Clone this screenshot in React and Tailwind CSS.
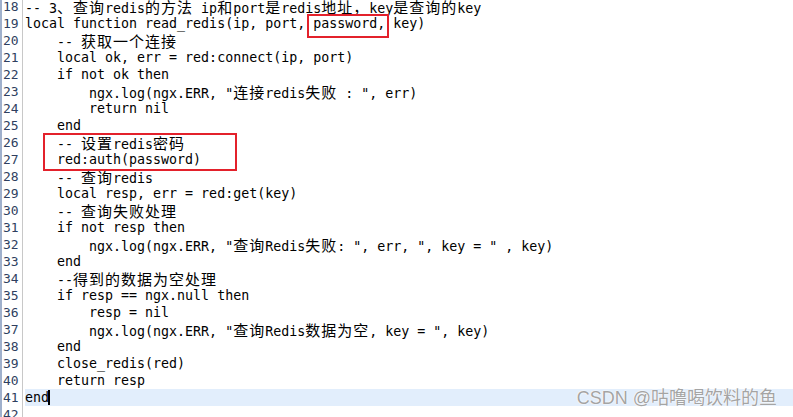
import React from "react";

const lines = [
  [18, "-- 3、查询redis的方法 ip和port是redis地址，key是查询的key"],
  [19, "local function read_redis(ip, port, password, key)"],
  [20, "    -- 获取一个连接"],
  [21, "    local ok, err = red:connect(ip, port)"],
  [22, "    if not ok then"],
  [23, "        ngx.log(ngx.ERR, \"连接redis失败 : \", err)"],
  [24, "        return nil"],
  [25, "    end"],
  [26, "    -- 设置redis密码"],
  [27, "    red:auth(password)"],
  [28, "    -- 查询redis"],
  [29, "    local resp, err = red:get(key)"],
  [30, "    -- 查询失败处理"],
  [31, "    if not resp then"],
  [32, "        ngx.log(ngx.ERR, \"查询Redis失败: \", err, \", key = \" , key)"],
  [33, "    end"],
  [34, "    --得到的数据为空处理"],
  [35, "    if resp == ngx.null then"],
  [36, "        resp = nil"],
  [37, "        ngx.log(ngx.ERR, \"查询Redis数据为空, key = \", key)"],
  [38, "    end"],
  [39, "    close_redis(red)"],
  [40, "    return resp"],
  [41, "end"],
  [42, ""],
];

function splitRuns(text) {
  const runs = [];
  const re = /[\u3000-\u303f\u4e00-\u9fff\uff00-\uffef]+/g;
  let last = 0;
  let m;
  while ((m = re.exec(text)) !== null) {
    if (m.index > last) runs.push({ cjk: false, t: text.slice(last, m.index) });
    runs.push({ cjk: true, t: m[0] });
    last = m.index + m[0].length;
  }
  if (last < text.length) runs.push({ cjk: false, t: text.slice(last) });
  return runs;
}

function Code({ text }) {
  return splitRuns(text).map((r, i) =>
    r.cjk ? (
      <span
        key={i}
        className="text-[15px] tracking-[1px] leading-[17px] font-['Noto_Sans_CJK_SC',sans-serif]"
      >
        {r.t}
      </span>
    ) : (
      <span key={i}>{r.t}</span>
    )
  );
}

export default function App() {
  return (
    <div className="relative w-[793px] h-[417px] overflow-hidden bg-white">
      <div className="flex h-[440px] -mt-[2px] font-['DejaVu_Sans_Mono','Liberation_Mono',monospace] text-[13.3px] text-black">
        <div className="w-[23px] shrink-0 border-l-2 border-l-[#9fb0cc] border-r border-r-[#c8c8c8] bg-white">
          {lines.map(([n]) => (
            <div
              key={n}
              className="h-[17px] leading-[17px] pl-[1px] text-[#2f3f5f] text-[13px] whitespace-pre"
            >
              {n}
            </div>
          ))}
        </div>
        <div className="flex-1 pl-[2px]">
          {lines.map(([n, text]) => (
            <div
              key={n}
              className={
                "relative h-[17px] leading-[17px] whitespace-pre " +
                (n === 41 ? "bg-[#e2eefc]" : "")
              }
            >
              <Code text={text} />
              {n === 41 && (
                <span className="absolute left-[23px] top-[1px] w-[2px] h-[15px] bg-black" />
              )}
            </div>
          ))}
        </div>
      </div>

      <div className="absolute left-[307px] top-[14px] w-[82px] h-[24px] border-2 border-[#e3212b]" />
      <div className="absolute left-[43px] top-[133px] w-[194px] h-[38px] border-2 border-[#e3212b]" />

      <div className="absolute right-[16px] top-[387px] text-[18px] leading-[22px] text-[#a4a4a4] font-['Liberation_Sans','Noto_Sans_CJK_SC',sans-serif] [text-shadow:0_0_1px_#fff,0_0_1px_#fff,0_0_2px_#fff] whitespace-pre">
        CSDN @咕噜喝饮料的鱼
      </div>
    </div>
  );
}
